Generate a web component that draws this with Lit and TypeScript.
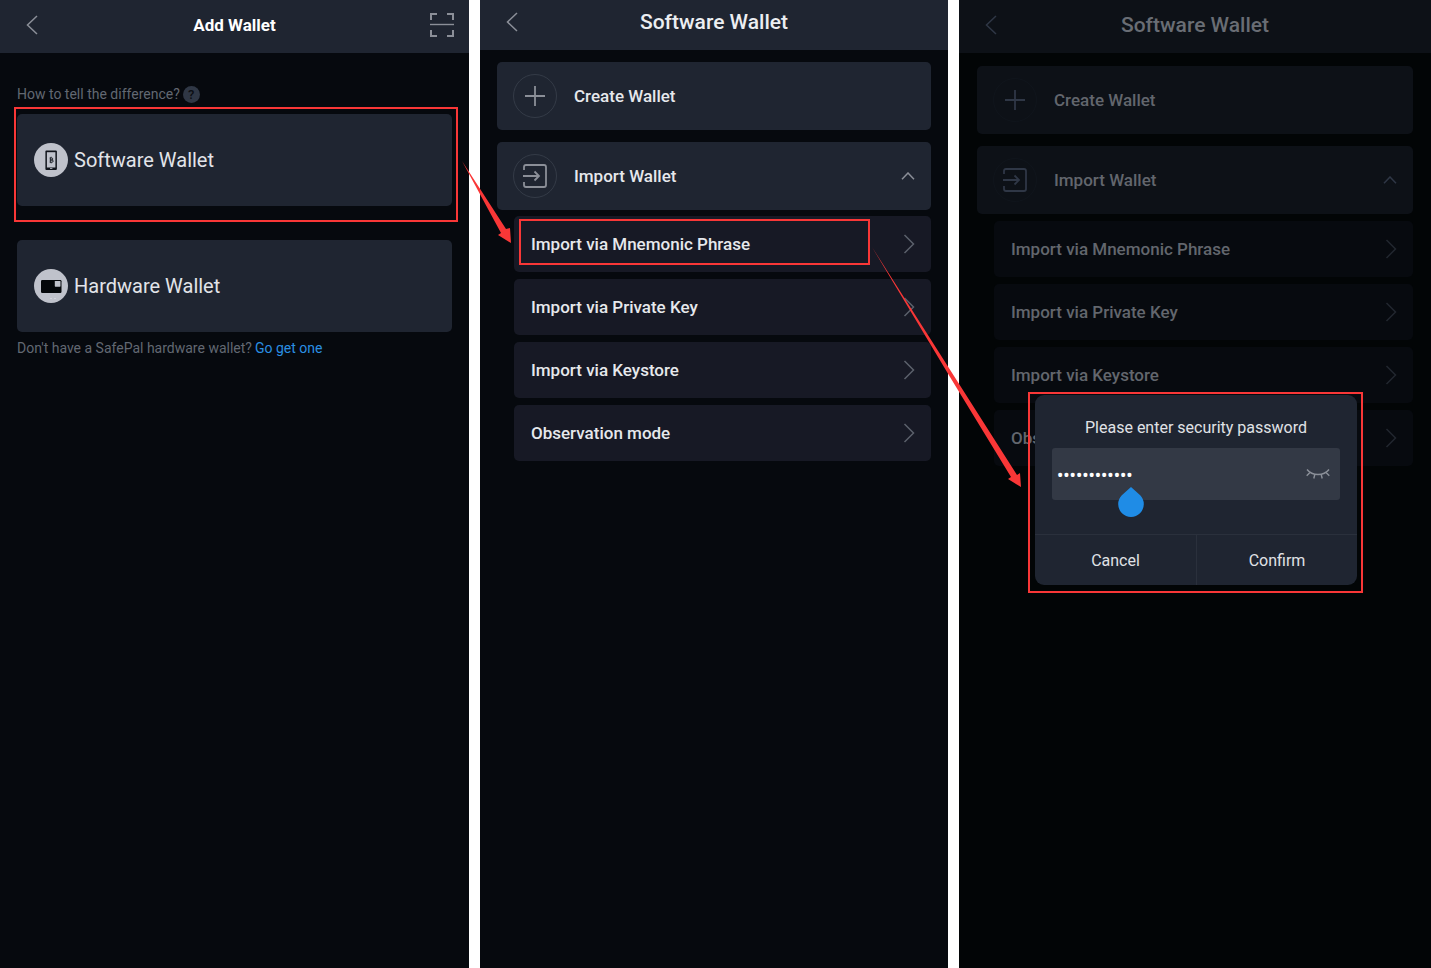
import { LitElement, html, svg, css, nothing } from "lit";
import { customElement, property } from "lit/decorators.js";

const backIcon = html`<svg width="12" height="20" viewBox="0 0 12 20" fill="none" stroke="currentColor" stroke-width="1.5" aria-hidden="true">
  <path d="M11 1 1.5 10 11 19" />
</svg>`;

const nextIcon = html`<svg width="12" height="20" viewBox="0 0 12 20" fill="none" stroke="currentColor" stroke-width="1.5" aria-hidden="true">
  <path d="M1.5 1 10.5 10 1.5 19" />
</svg>`;

const collapseIcon = html`<svg width="14" height="8" viewBox="0 0 14 8" fill="none" stroke="currentColor" stroke-width="1.5" aria-hidden="true">
  <path d="M1 7.2 7 1 13 7.2" />
</svg>`;

const scanIcon = html`<svg width="24" height="24" viewBox="0 0 24 24" fill="none" stroke="currentColor" stroke-width="2" aria-hidden="true">
  <path d="M1 7V1h6M17 1h6v6M23 17v6h-6M7 23H1v-6" />
  <path d="M0 11.500h24" stroke-width="1.4" />
</svg>`;

const plusIcon = html`<svg width="20" height="20" viewBox="0 0 20 20" fill="none" stroke="currentColor" stroke-width="1.8" aria-hidden="true">
  <path d="M10 0v20M0 10h20" />
</svg>`;

const importIcon = html`<svg width="24" height="24" viewBox="0 0 24 24" fill="none" stroke="currentColor" stroke-width="1.8" aria-hidden="true">
  <path d="M1 6V3q0-2 2-2h18q2 0 2 2v18q0 2-2 2H3q-2 0-2-2v-3" />
  <path d="M0 12h15.500M11.500 7.500 16 12l-4.500 4.500" />
</svg>`;

const phoneIcon = html`<svg width="34" height="34" viewBox="0 0 34 34" aria-hidden="true">
  <circle cx="17" cy="17" r="17" fill="#bfc2cb" />
  <rect x="11.400" y="7.400" width="11.500" height="19.500" rx="1" fill="#10141b" />
  <rect x="12.900" y="9.200" width="8.500" height="15.300" fill="#bfc2cb" />
  <rect x="16" y="25.200" width="2.400" height=".8" fill="#bfc2cb" />
  <path d="M15.800 15h1.800q1.200 0 1.200 1t-1.200 1h-1.300 1.600q1.300 0 1.300 1.100t-1.300 1.100h-2.100M16.300 14.500v5M17.200 13.800v.9M17.200 19.400v.9" fill="none" stroke="#10141b" stroke-width=".9" />
</svg>`;

const deviceIcon = html`<svg width="34" height="34" viewBox="0 0 34 34" aria-hidden="true">
  <circle cx="17" cy="17" r="17" fill="#bfc2cb" />
  <rect x="7" y="11" width="20.500" height="13" rx="1.200" fill="#04070a" />
  <rect x="20.800" y="12" width="5.700" height="5.700" rx=".6" fill="#bfc2cb" />
  <path d="M16.500 29.500h1M20.500 29.500h1" stroke="#e4e6ea" />
</svg>`;

const eyeClosedIcon = html`<svg width="24" height="12" viewBox="0 0 24 12" fill="none" stroke="currentColor" stroke-width="1.4" aria-hidden="true">
  <path d="M1 1.500Q5 6.500 12 6.500T23 1.500" />
  <path d="M4 4.500.7 7.700M8.800 6.500 7.800 10.500M15.200 6.500l1 4M20 4.500l3.300 3.200" />
</svg>`;

const dropHandle = html`<svg class="handle" width="26" height="30" viewBox="0 0 26 30" fill="#1f8ce6" aria-hidden="true">
  <path d="M13 0 22.200 8.200A12.800 12.800 0 1 1 3.800 8.200Z" />
</svg>`;

@customElement("title-bar")
class TitleBar extends LitElement {
  @property() heading = "";

  static styles = css`
    :host {
      display: grid;
      grid-template-columns: 44px 1fr 44px;
      align-items: center;
      box-sizing: border-box;
      height: var(--bar-height);
      padding-bottom: var(--bar-drop);
      background: var(--card);
      color: var(--icon);
    }
    button {
      display: flex;
      justify-content: flex-end;
      padding: 0 6px 0 0;
      border: 0;
      background: none;
      color: inherit;
      cursor: pointer;
    }
    h1 {
      margin: 0;
      text-align: center;
      font-size: var(--bar-size);
      line-height: 28px;
      font-weight: var(--bar-weight);
      color: var(--bar-text);
    }
  `;

  render() {
    return html`
      <button aria-label="Back">${backIcon}</button>
      <h1>${this.heading}</h1>
      <slot></slot>
    `;
  }
}

@customElement("software-screen")
class SoftwareScreen extends LitElement {
  @property({ type: Boolean }) marked = false;

  static styles = css`
    :host {
      display: block;
    }
    .body {
      display: flex;
      flex-direction: column;
      gap: 12px;
      padding: var(--body-top) var(--body-side) 0;
    }
    button {
      position: relative;
      display: flex;
      align-items: center;
      width: 100%;
      border: 0;
      border-radius: 5px;
      font: inherit;
      font-weight: 500;
      text-align: left;
      color: var(--text);
      cursor: pointer;
    }
    .card {
      height: 68px;
      gap: 17px;
      padding: 0 16px;
      background: var(--card);
      font-size: 17px;
    }
    .ring {
      display: grid;
      place-items: center;
      box-sizing: border-box;
      width: 44px;
      height: 44px;
      border: 1px solid var(--ring);
      border-radius: 50%;
      color: var(--icon);
    }
    .label {
      flex: 1;
    }
    .end {
      display: flex;
      color: var(--icon);
    }
    ul {
      display: flex;
      flex-direction: column;
      gap: 7px;
      margin: var(--list-shift) 0 0 17px;
      padding: 0;
      list-style: none;
    }
    .row {
      height: 56px;
      padding: 0 16px 0 17px;
      background: var(--row);
      font-size: 17px;
    }
    .row .end {
      color: var(--chevron);
    }
    .mark {
      position: absolute;
      inset: 3px 61px 7px 5px;
      border: 2px solid #f93737;
    }
  `;

  render() {
    const rows = ["Import via Mnemonic Phrase", "Import via Private Key", "Import via Keystore", "Observation mode"];
    return html`
      <title-bar heading="Software Wallet"></title-bar>
      <div class="body">
        <button class="card">
          <span class="ring">${plusIcon}</span>
          <span class="label">Create Wallet</span>
        </button>
        <button class="card" aria-expanded="true">
          <span class="ring">${importIcon}</span>
          <span class="label">Import Wallet</span>
          <span class="end">${collapseIcon}</span>
        </button>
        <ul>
          ${rows.map(
            (name, i) => html`<li>
              <button class="row">
                <span class="label">${name}</span>
                <span class="end">${nextIcon}</span>
                ${this.marked && i === 0 ? html`<span class="mark"></span>` : nothing}
              </button>
            </li>`
          )}
        </ul>
      </div>
    `;
  }
}

@customElement("add-screen")
class AddScreen extends LitElement {
  static styles = css`
    :host {
      display: block;
    }
    .scan {
      display: flex;
      justify-content: flex-end;
      padding: 0 15px 0 0;
      border: 0;
      background: none;
      color: #8b8f98;
      cursor: pointer;
    }
    .body {
      padding: 32px 17px 0;
    }
    p {
      display: flex;
      align-items: center;
      gap: 3px;
      margin: 0;
      font-size: 14px;
      line-height: 18px;
      color: #626872;
    }
    .help {
      display: grid;
      place-items: center;
      width: 17px;
      height: 17px;
      padding: 0;
      border: 0;
      border-radius: 50%;
      background: #2f3745;
      color: #0b0e13;
      font: inherit;
      font-size: 13px;
      font-weight: 500;
      line-height: 17px;
      cursor: pointer;
    }
    .card {
      position: relative;
      display: flex;
      align-items: center;
      gap: 6px;
      width: 100%;
      height: 92px;
      margin: 11px 0 34px;
      padding: 0 17px;
      border: 0;
      border-radius: 5px;
      background: var(--card);
      color: #e2e4e9;
      font: inherit;
      font-size: 20px;
      cursor: pointer;
    }
    .card + .card {
      margin: 0 0 7px;
    }
    .mark {
      position: absolute;
      inset: -7px -6px -16px -3px;
      border: 2px solid #f93737;
    }
    a {
      color: #2a8fe3;
      text-decoration: none;
    }
  `;

  render() {
    return html`
      <title-bar heading="Add Wallet">
        <button class="scan" aria-label="Scan">${scanIcon}</button>
      </title-bar>
      <div class="body">
        <p>How to tell the difference? <button class="help" aria-label="Help">?</button></p>
        <button class="card">${phoneIcon}<span>Software Wallet</span><span class="mark"></span></button>
        <button class="card">${deviceIcon}<span>Hardware Wallet</span></button>
        <p>Don't have a SafePal hardware wallet? <a href="#get">Go get one</a></p>
      </div>
    `;
  }
}

@customElement("password-dialog")
class PasswordDialog extends LitElement {
  static styles = css`
    :host {
      position: relative;
      display: block;
      box-sizing: border-box;
      width: 322px;
      padding-top: 21px;
      border-radius: 9px;
      background: #1f2531;
      color: #e0e2e6;
      font-size: 16px;
    }
    label {
      display: block;
      line-height: 24px;
      text-align: center;
    }
    .field {
      position: relative;
      display: flex;
      align-items: center;
      height: 52px;
      margin: 8px 17px 34px;
      padding: 0 10px 0 5px;
      border-radius: 3px;
      background: #333945;
    }
    input {
      flex: 1;
      min-width: 0;
      padding: 2px 0 0;
      border: 0;
      outline: 0;
      background: none;
      color: #fff;
      font: inherit;
      font-size: 18px;
      font-weight: 500;
    }
    .eye {
      display: flex;
      padding: 0;
      border: 0;
      background: none;
      color: #8b9099;
      cursor: pointer;
    }
    .handle {
      position: absolute;
      left: 66px;
      top: 39px;
    }
    .actions {
      display: grid;
      grid-template-columns: 1fr 1fr;
      border-top: 1px solid #2a303c;
    }
    .actions button {
      height: 50px;
      padding: 0;
      border: 0;
      background: none;
      color: inherit;
      font: inherit;
      cursor: pointer;
    }
    .actions button + button {
      border-left: 1px solid #2a303c;
    }
    .mark {
      position: absolute;
      inset: -3px -6px -8px -7px;
      border: 2px solid #f93737;
      pointer-events: none;
    }
  `;

  render() {
    return html`
      <label for="password">Please enter security password</label>
      <div class="field">
        <input id="password" type="password" value="safepalvault" />
        <button class="eye" aria-label="Show password">${eyeClosedIcon}</button>
        ${dropHandle}
      </div>
      <div class="actions">
        <button>Cancel</button>
        <button>Confirm</button>
      </div>
      <span class="mark"></span>
    `;
  }
}

@customElement("app-root")
class AppRoot extends LitElement {
  static styles = css`
    :host {
      position: relative;
      display: grid;
      grid-template-columns: 469fr 468fr 472fr;
      gap: 11px;
      min-height: 100vh;
      overflow: hidden;
      background: #fff;
      font-family: Roboto, "Liberation Sans", sans-serif;
    }
    .screen {
      position: relative;
      background: #06090e;
      --card: #1f2531;
      --row: #171925;
      --text: #e6e8ec;
      --icon: #8b8f98;
      --chevron: #5b606b;
      --ring: #343b47;
      --bar-height: 50px;
      --bar-size: 21px;
      --bar-weight: 500;
      --bar-text: #eceef1;
      --bar-drop: 6px;
      --body-top: 12px;
      --body-side: 17px;
      --list-shift: -6px;
    }
    .add {
      --bar-height: 53px;
      --bar-size: 17px;
      --bar-weight: 700;
      --bar-text: #fff;
      --bar-drop: 3px;
    }
    .dimmed {
      background: #020506;
      --card: #0d1117;
      --row: #070a0f;
      --text: #62666d;
      --icon: #2f3746;
      --chevron: #22272f;
      --ring: #10151c;
      --bar-height: 53px;
      --bar-text: #696d74;
      --bar-drop: 3px;
      --body-top: 13px;
      --body-side: 18px;
      --list-shift: -5px;
    }
    .overlay {
      position: absolute;
      inset: 0;
      display: grid;
      place-items: center;
      padding: 12px 0 0 2px;
    }
    .arrows {
      position: absolute;
      left: 0;
      top: 0;
      pointer-events: none;
    }
  `;

  render() {
    const arrows = [
      "462,161 506,229 510,228 511,243 498,235 501,233",
      "872,247 954,376 1017,475 1020,473 1021,487 1008,479 1011,477 950,377",
    ];
    return html`
      <add-screen class="screen add"></add-screen>
      <software-screen class="screen" marked></software-screen>
      <div class="screen dimmed">
        <software-screen></software-screen>
        <div class="overlay"><password-dialog></password-dialog></div>
      </div>
      <svg class="arrows" width="1431" height="600" viewBox="0 0 1431 600" fill="#f93737" aria-hidden="true">
        ${arrows.map((points) => svg`<polygon points=${points} />`)}
      </svg>
    `;
  }
}
